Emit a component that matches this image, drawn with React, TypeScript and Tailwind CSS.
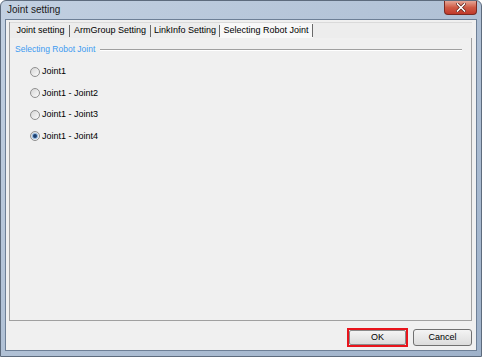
import React from "react";

const tabs = [
  { label: "Joint setting", w: "w-[58px]" },
  { label: "ArmGroup Setting", w: "w-[81px]" },
  { label: "LinkInfo Setting", w: "w-[69px]" },
];

const joints = ["Joint1", "Joint1 - Joint2", "Joint1 - Joint3", "Joint1 - Joint4"];

function Radio({ checked }: { checked?: boolean }) {
  return (
    <span className="flex h-[10px] w-[10px] items-center justify-center rounded-full border border-[#8f8f8f] bg-gradient-to-br from-[#d6d6d6] to-[#fbfbfb]">
      {checked && (
        <span className="flex h-[6px] w-[6px] items-center justify-center rounded-full bg-[#8fb6df]">
          <span className="h-[4px] w-[4px] rounded-full bg-[#1d3f6e]" />
        </span>
      )}
    </span>
  );
}

export default function App() {
  return (
    <div
      className="flex h-[357px] w-[482px] flex-col overflow-hidden rounded-t-[6px] border border-[#5d6b7d] bg-gradient-to-br from-[#c2d0e1] to-[#9fb2ca] px-[4px] pb-[5px] text-black"
      style={{ fontFamily: '"Liberation Sans", Arial, sans-serif' }}
    >
      {/* Title bar */}
      <div className="flex h-[18px] items-start justify-between">
        <span className="pl-[2px] pt-[3px] text-[10px] leading-[12px] text-[#1a1a1a]">Joint setting</span>
        <div className="flex h-[14px] w-[33px] items-center justify-center rounded-b-[4px] border border-t-0 border-[#7a2a22] bg-gradient-to-b from-[#e4a596] via-[#cf5a45] to-[#c0392b]">
          <svg width="10" height="9" viewBox="0 0 10 9">
            <path d="M1.5 1 L8.5 8 M8.5 1 L1.5 8" stroke="#5a1d16" strokeWidth="3" strokeLinecap="square" />
            <path d="M1.5 1 L8.5 8 M8.5 1 L1.5 8" stroke="#ffffff" strokeWidth="1.6" strokeLinecap="square" />
          </svg>
        </div>
      </div>

      {/* Client area */}
      <div className="flex flex-1 flex-col border border-[#6d7f96] bg-[#f0f0f0] pl-[3px] pr-[4px] pt-[2px]">
        <div className="flex h-[299px] flex-col border-b border-l border-[#a0a0a0]">
          {/* Tab strip */}
          <div className="flex h-[16px] items-end border-t border-[#dadada] bg-[#ededed] pl-[2px] text-[9px]">
            {tabs.map((t) => (
              <div key={t.label} className={`flex h-[15px] items-center justify-center ${t.w}`}>
                <span className="flex-1 text-center leading-[11px]">{t.label}</span>
                <span className="h-[12px] w-px bg-[#6a6a6a]" />
              </div>
            ))}
            <div className="flex h-[15px] w-[93px] items-center bg-[#f8f8f8]">
              <span className="flex-1 text-center leading-[11px]">Selecting Robot Joint</span>
              <span className="h-[13px] w-px bg-[#6a6a6a]" />
            </div>
          </div>

          {/* Tab page */}
          <div className="flex flex-1 flex-col border-r border-[#a0a0a0] pl-[5px] pr-[9px] pt-[6px]">
            <div className="flex items-center gap-[5px]">
              <span className="text-[8.5px] leading-[11px] text-[#3d9bf0]">Selecting Robot Joint</span>
              <span className="h-[2px] flex-1 border-t border-b border-t-[#a0a0a0] border-b-[#ffffff]" />
            </div>
            <div className="flex flex-col gap-[10.5px] pl-[15px] pt-[11px]">
              {joints.map((j, i) => (
                <div key={j} className="flex h-[11px] items-center gap-[2px]">
                  <Radio checked={i === 3} />
                  <span className="text-[9px] leading-[11px]">{j}</span>
                </div>
              ))}
            </div>
          </div>
        </div>

        {/* Buttons */}
        <div className="flex justify-end gap-[5px] pt-[7px] text-[9px]">
          <div className="border-2 border-[#e8141c]">
            <button className="flex h-[15px] w-[57px] items-center justify-center rounded-[2px] border border-[#8a8a8a] bg-gradient-to-b from-[#f4f4f4] to-[#dcdcdc] leading-[11px]">
              OK
            </button>
          </div>
          <button className="mt-[1px] flex h-[17px] w-[59px] items-center justify-center rounded-[3px] border border-[#707070] bg-gradient-to-b from-[#f4f4f4] to-[#dcdcdc] leading-[11px]">
            Cancel
          </button>
        </div>
      </div>
    </div>
  );
}
